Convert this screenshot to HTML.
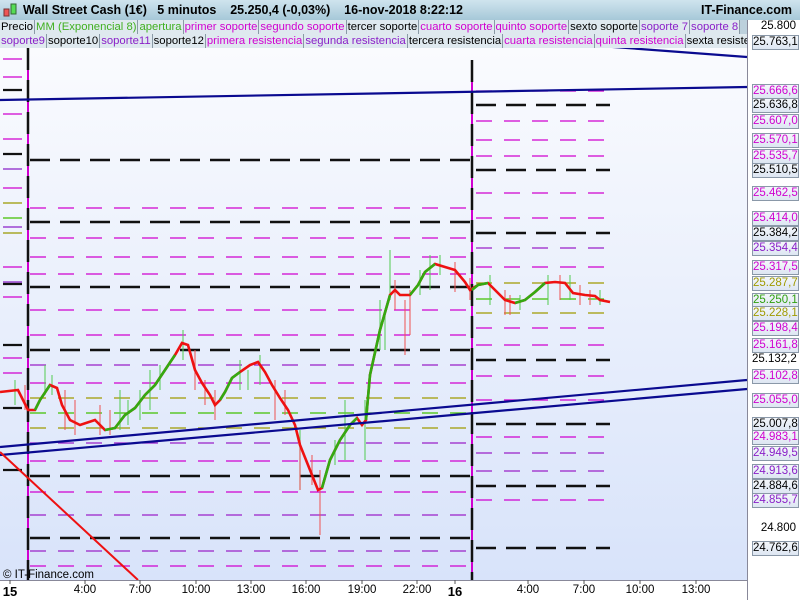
<!DOCTYPE html><html><head><meta charset="utf-8"><style>
body{margin:0;width:800px;height:600px;overflow:hidden;font-family:"Liberation Sans",sans-serif;background:#fff;position:relative}
.h1{position:absolute;left:0;top:0;width:800px;height:20px;background:linear-gradient(#cfe4ee,#a6c8d8);border-bottom:1px solid #8aa;font-size:12.5px;font-weight:bold;line-height:20px}
.row{position:absolute;left:0;width:747px;height:14px;background:#bcd0dc;font-size:11.3px;line-height:14px;white-space:nowrap;overflow:hidden}
.row span{display:inline-block;background:#dfe9ef;border-right:1px solid #8a9aa6;padding:0 1px}
.m{color:#d000d0}.p{color:#8a20c8}.g{color:#40b020}.k{color:#000}
.ax{position:absolute;left:747px;top:20px;width:53px;height:580px;background:#fff;border-left:1px solid #889}
.lb{position:absolute;left:752px;width:44px;height:13px;border:1px solid #8a98a8;background:linear-gradient(#f4f7fb,#dde6f2);font-size:11.5px;line-height:13px;text-align:right;padding-right:1px}
.bx{position:absolute;top:584px;font-size:11.5px;transform:translateX(-50%)}
</style></head><body>
<div class="h1"><svg style="position:absolute;left:2px;top:3px" width="16" height="16"><rect x="2" y="6" width="5" height="7" fill="#e55" stroke="#733" /><rect x="9" y="1" width="5" height="10" fill="#5d5" stroke="#363"/></svg><span style="position:absolute;left:23px">Wall Street Cash (1€)&nbsp;&nbsp; 5 minutos&nbsp;&nbsp;&nbsp; 25.250,4 (-0,03%)&nbsp;&nbsp;&nbsp; 16-nov-2018 8:22:12</span><span style="position:absolute;right:8px">IT-Finance.com</span></div>
<div class="row" style="top:20px;height:14px;width:747px"><span class="k">Precio</span><span class="g">MM (Exponencial 8)</span><span class="g">apertura</span><span class="m">primer soporte</span><span class="m">segundo soporte</span><span class="k">tercer soporte</span><span class="m">cuarto soporte</span><span class="m">quinto soporte</span><span class="k">sexto soporte</span><span class="p">soporte 7</span><span class="p">soporte 8</span></div>
<div class="row" style="top:34px"><span class="p">soporte9</span><span class="k">soporte10</span><span class="p">soporte11</span><span class="k">soporte12</span><span class="m">primera resistencia</span><span class="p">segunda resistencia</span><span class="k">tercera resistencia</span><span class="m">cuarta resistencia</span><span class="m">quinta resistencia</span><span class="k">sexta resistencia</span></div>
<div class="ax"></div>
<svg style="position:absolute;left:0;top:48px" width="747" height="532" viewBox="0 48 747 532">
<defs><linearGradient id="bg" x1="0" y1="0" x2="0" y2="1"><stop offset="0" stop-color="#fafbfe"/><stop offset="1" stop-color="#d8e3fa"/></linearGradient></defs>
<rect x="0" y="48" width="747" height="532" fill="url(#bg)"/>
<g stroke-width="1.3">
<g stroke="#d000d0"><line x1="3" y1="59" x2="22" y2="59"/><line x1="3" y1="77" x2="22" y2="77"/><line x1="3" y1="114" x2="22" y2="114"/><line x1="3" y1="139" x2="22" y2="139"/><line x1="3" y1="188" x2="22" y2="188"/><line x1="3" y1="267" x2="22" y2="267"/><line x1="3" y1="297" x2="22" y2="297"/><line x1="3" y1="358" x2="22" y2="358"/><line x1="3" y1="373" x2="22" y2="373"/></g>
<g stroke="#8a20c8"><line x1="3" y1="169" x2="22" y2="169"/><line x1="3" y1="227" x2="22" y2="227"/><line x1="3" y1="282" x2="22" y2="282"/></g>
<g stroke="#999900"><line x1="3" y1="203" x2="22" y2="203"/><line x1="3" y1="233" x2="22" y2="233"/></g>
<line x1="3" y1="218" x2="22" y2="218" stroke="#40c000"/>
<g stroke="#111" stroke-width="2.2"><line x1="3" y1="90" x2="22" y2="90"/><line x1="3" y1="154" x2="22" y2="154"/><line x1="3" y1="284" x2="22" y2="284"/><line x1="3" y1="345" x2="22" y2="345"/><line x1="3" y1="408" x2="22" y2="408"/><line x1="3" y1="470" x2="22" y2="470"/></g>
<g stroke="#d000d0" stroke-dasharray="16 12"><line x1="30" y1="208" x2="472" y2="208"/><line x1="30" y1="238" x2="472" y2="238"/><line x1="30" y1="257" x2="472" y2="257"/><line x1="30" y1="274" x2="472" y2="274"/><line x1="30" y1="310" x2="472" y2="310"/><line x1="30" y1="335" x2="472" y2="335"/><line x1="30" y1="383" x2="472" y2="383"/><line x1="30" y1="461" x2="472" y2="461"/><line x1="30" y1="492" x2="472" y2="492"/><line x1="30" y1="566" x2="472" y2="566"/></g>
<g stroke="#9a20c8" stroke-dasharray="16 12"><line x1="30" y1="365" x2="472" y2="365"/><line x1="30" y1="443" x2="472" y2="443"/><line x1="30" y1="515" x2="472" y2="515"/><line x1="30" y1="551" x2="472" y2="551"/></g>
<g stroke="#a09a00" stroke-dasharray="16 12"><line x1="30" y1="398" x2="472" y2="398"/><line x1="30" y1="428" x2="472" y2="428"/></g>
<line x1="30" y1="413" x2="472" y2="413" stroke="#40c000" stroke-dasharray="16 12"/>
<g stroke="#111" stroke-width="2.5" stroke-dasharray="20 10"><line x1="30" y1="160" x2="472" y2="160"/><line x1="30" y1="222" x2="472" y2="222"/><line x1="30" y1="287" x2="472" y2="287"/><line x1="30" y1="350" x2="472" y2="350"/><line x1="30" y1="476" x2="472" y2="476"/><line x1="30" y1="538" x2="472" y2="538"/></g>
<g stroke="#d000d0" stroke-dasharray="16 12"><line x1="476" y1="91" x2="610" y2="91"/><line x1="476" y1="121" x2="610" y2="121"/><line x1="476" y1="140" x2="610" y2="140"/><line x1="476" y1="156" x2="610" y2="156"/><line x1="476" y1="193" x2="610" y2="193"/><line x1="476" y1="218" x2="610" y2="218"/><line x1="476" y1="267" x2="610" y2="267"/><line x1="476" y1="328" x2="610" y2="328"/><line x1="476" y1="345" x2="610" y2="345"/><line x1="476" y1="376" x2="610" y2="376"/><line x1="476" y1="400" x2="610" y2="400"/><line x1="476" y1="437" x2="610" y2="437"/><line x1="476" y1="500" x2="610" y2="500"/></g>
<g stroke="#9a20c8" stroke-dasharray="16 12"><line x1="476" y1="248" x2="610" y2="248"/><line x1="476" y1="453" x2="610" y2="453"/><line x1="476" y1="471" x2="610" y2="471"/></g>
<g stroke="#a09a00" stroke-dasharray="16 12"><line x1="476" y1="283" x2="610" y2="283"/><line x1="476" y1="313" x2="610" y2="313"/></g>
<line x1="476" y1="299" x2="610" y2="299" stroke="#40c000" stroke-dasharray="16 12"/>
<g stroke="#111" stroke-width="2.5" stroke-dasharray="20 10"><line x1="476" y1="105" x2="610" y2="105"/><line x1="476" y1="170" x2="610" y2="170"/><line x1="476" y1="233" x2="610" y2="233"/><line x1="476" y1="360" x2="610" y2="360"/><line x1="476" y1="424" x2="610" y2="424"/><line x1="476" y1="486" x2="610" y2="486"/><line x1="476" y1="548" x2="610" y2="548"/></g>
</g>
<line x1="28" y1="48" x2="28" y2="580" stroke="#d000d0" stroke-width="2"/>
<line x1="28" y1="48" x2="28" y2="580" stroke="#111" stroke-width="2.5" stroke-dasharray="22 10"/>
<line x1="472" y1="60" x2="472" y2="580" stroke="#d000d0" stroke-width="2"/>
<line x1="472" y1="60" x2="472" y2="580" stroke="#111" stroke-width="2.5" stroke-dasharray="22 10"/>
<g stroke-width="1.2" opacity="0.85">
<path stroke="#5c5" d="M15 380v25M45 365v30M52 375v20M120 390v40M128 400v25M140 390v30M150 370v40M160 365v25M183 330v30M240 360v30M248 370v20M380 300v50M385 310v40M390 250v50M430 255v35M440 255v20M490 275v30M520 295v15M548 275v30M570 275v25M600 290v15M260 355v30M345 400v60M365 400v60M300 430v60M335 440v25M420 270v25"/>
<path stroke="#e55" d="M25 385v25M65 390v40M75 400v35M100 405v30M110 410v25M195 350v40M205 380v25M215 390v30M275 380v40M285 390v25M320 470v65M410 290v45M455 262v30M470 278v22M505 290v25M580 285v20M300 440v50M405 300v55M312 455v30M395 280v30M510 295v20M560 275v25M590 290v15"/>
</g>
<polyline fill="none" stroke="#ee1111" stroke-width="2.6" points="0,392 18,390 28,410 35,410 40,400 50,385 57,388 62,405 70,420 80,425 95,420 105,430 115,428 125,415 135,408 145,395 155,385 165,370 175,355 182,343 188,345 195,370 202,383 210,395 215,405 220,400 225,392 232,378 240,372 250,365 258,362 265,372 272,385 280,398 288,410 295,425 300,445 310,470 318,490 322,488 330,460 340,440 350,425 357,418 362,425 366,420 370,375 380,330 390,295 395,290 400,295 410,295 418,285 425,272 435,264 445,267 455,270 465,282 470,290 478,285 488,283 495,290 505,300 515,303 525,300 535,292 545,283 555,282 565,283 573,293 585,295 595,296 600,300 610,302"/>
<g fill="none" stroke="#33aa11" stroke-width="2.6"><polyline points="35,410 40,400 50,385"/><polyline points="105,430 115,428 125,415 135,408 145,395 155,385 165,370 175,355"/><polyline points="220,400 225,392 232,378 240,372"/><polyline points="322,488 330,460 340,440 350,425 357,418"/><polyline points="366,420 370,375 380,330 390,295"/><polyline points="410,295 418,285 425,272 435,264"/><polyline points="472,290 478,285 488,283"/><polyline points="515,303 525,300 535,292 545,283"/></g>
<g stroke="#0a0a90" stroke-width="2.2"><line x1="0" y1="100" x2="747" y2="87"/><line x1="0" y1="447" x2="747" y2="380"/><line x1="0" y1="455" x2="747" y2="389"/><line x1="600" y1="46" x2="747" y2="57"/></g>
<line x1="0" y1="452" x2="138" y2="580" stroke="#ee1111" stroke-width="2"/>
<text x="3" y="578" font-size="11.5" font-family="Liberation Sans" fill="#000">© IT-Finance.com</text>
</svg>
<div style="position:absolute;left:0;top:580px;width:747px;height:20px;background:#fff;border-top:1px solid #889"></div>
<svg style="position:absolute;left:0;top:580px" width="747" height="5"><g stroke="#555"><path d="M10 0v4M85 0v4M140 0v4M196 0v4M251 0v4M306 0v4M362 0v4M417 0v4M455 0v4M528 0v4M584 0v4M640 0v4M696 0v4"/></g></svg>
<div class="bx" style="left:10px;font-weight:bold;font-size:13px">15</div><div class="bx" style="left:85px">4:00</div><div class="bx" style="left:140px">7:00</div><div class="bx" style="left:196px">10:00</div><div class="bx" style="left:251px">13:00</div><div class="bx" style="left:306px">16:00</div><div class="bx" style="left:362px">19:00</div><div class="bx" style="left:417px">22:00</div><div class="bx" style="left:455px;font-weight:bold;font-size:13px">16</div><div class="bx" style="left:528px">4:00</div><div class="bx" style="left:584px">7:00</div><div class="bx" style="left:640px">10:00</div><div class="bx" style="left:696px">13:00</div>
<div class="lb" style="top:20px;border:none;background:#fff">25.800</div>
<div class="lb" style="top:35px">25.763,1</div>
<div class="lb m" style="top:84px">25.666,6</div>
<div class="lb k" style="top:98px">25.636,8</div>
<div class="lb m" style="top:114px">25.607,0</div>
<div class="lb m" style="top:133px">25.570,1</div>
<div class="lb m" style="top:149px">25.535,7</div>
<div class="lb k" style="top:163px">25.510,5</div>
<div class="lb m" style="top:186px">25.462,5</div>
<div class="lb m" style="top:211px">25.414,0</div>
<div class="lb k" style="top:226px">25.384,2</div>
<div class="lb p" style="top:241px">25.354,4</div>
<div class="lb m" style="top:260px">25.317,5</div>
<div class="lb" style="top:276px;color:#a09a00">25.287,7</div>
<div class="lb g" style="top:293px;color:#30a010">25.250,1</div>
<div class="lb" style="top:306px;color:#a09a00">25.228,1</div>
<div class="lb m" style="top:321px">25.198,4</div>
<div class="lb m" style="top:338px">25.161,8</div>
<div class="lb k" style="top:353px;border:none;background:#fff">25.132,2</div>
<div class="lb m" style="top:369px">25.102,8</div>
<div class="lb m" style="top:393px">25.055,0</div>
<div class="lb k" style="top:417px">25.007,8</div>
<div class="lb m" style="top:430px">24.983,1</div>
<div class="lb p" style="top:446px">24.949,5</div>
<div class="lb p" style="top:464px">24.913,6</div>
<div class="lb k" style="top:479px">24.884,6</div>
<div class="lb p" style="top:493px">24.855,7</div>
<div class="lb k" style="top:522px;border:none;background:#fff">24.800</div>
<div class="lb k" style="top:541px">24.762,6</div>
</body></html>
